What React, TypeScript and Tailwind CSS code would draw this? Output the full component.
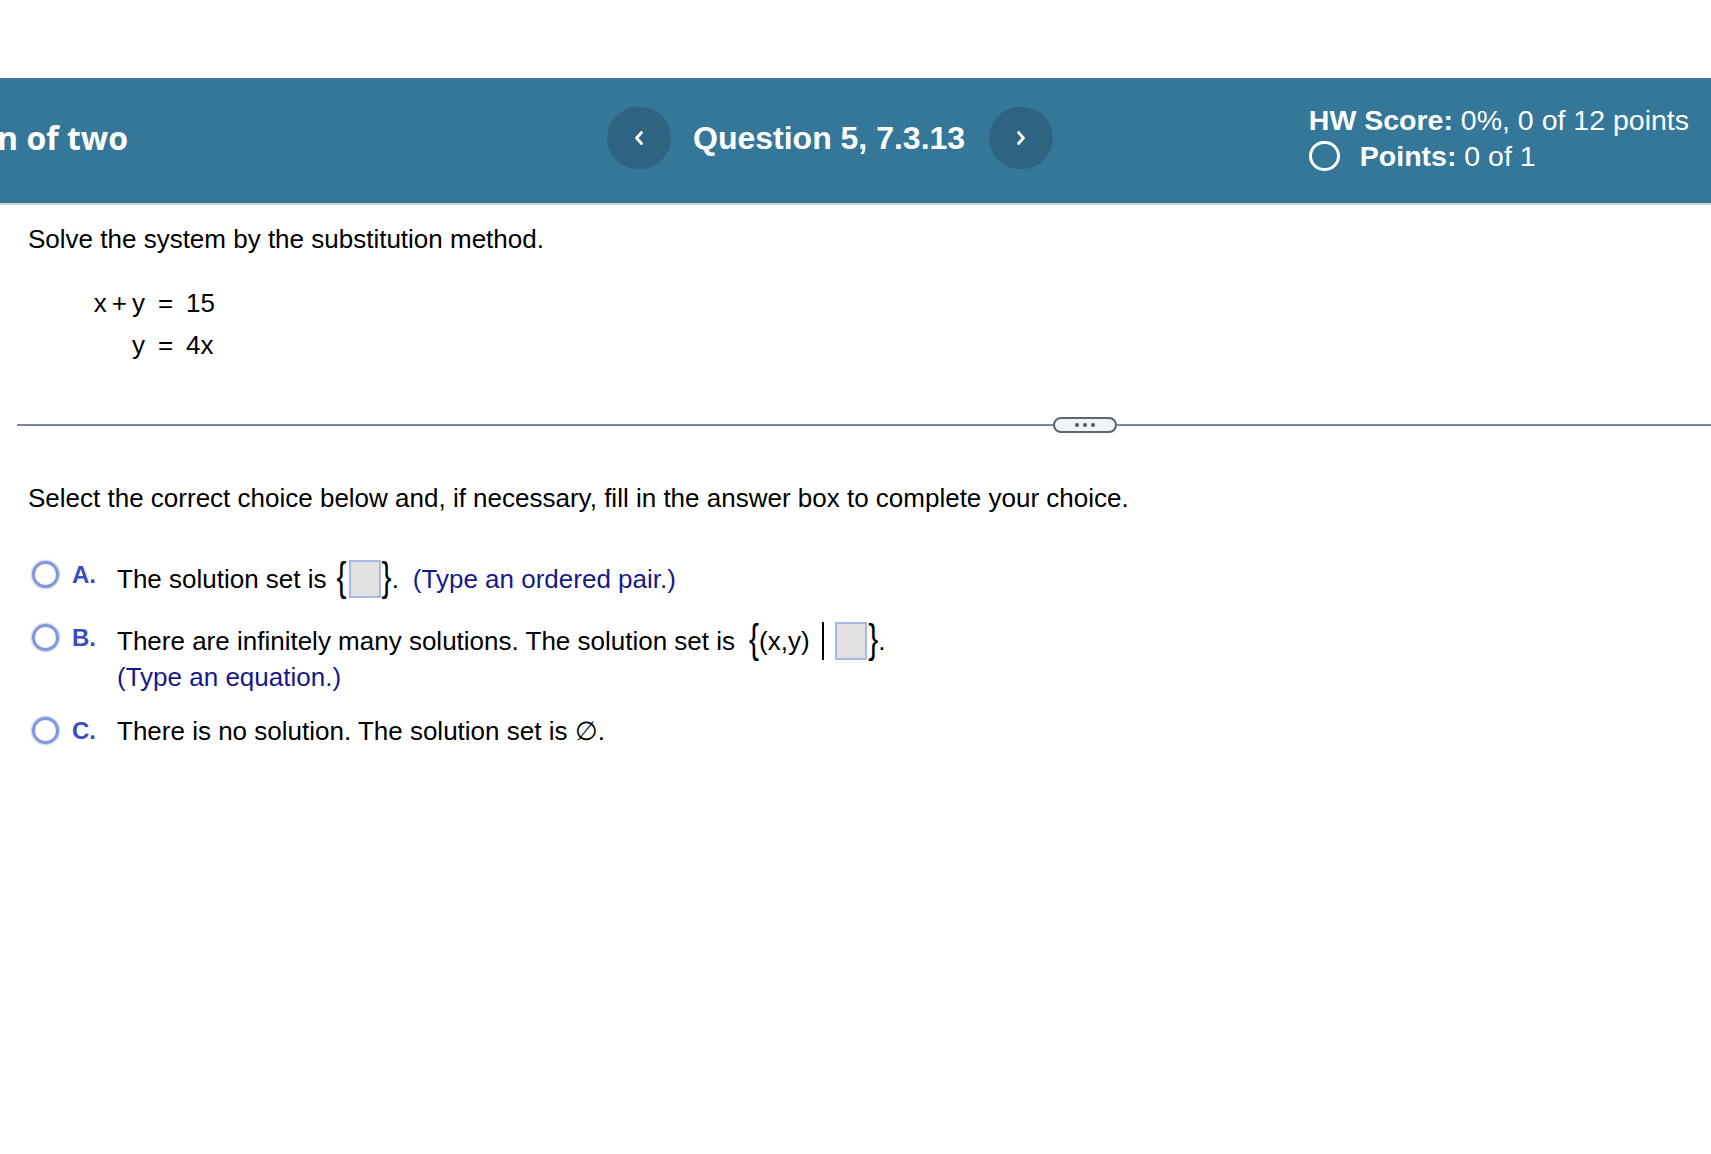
import React from "react";

function Chevron({ dir }: { dir: "left" | "right" }) {
  return (
    <svg width="12" height="16" viewBox="0 0 12 16" fill="none">
      <path
        d={dir === "left" ? "M8.5 2.5 L3.5 8 L8.5 13.5" : "M3.5 2.5 L8.5 8 L3.5 13.5"}
        stroke="white"
        strokeWidth="2.8"
        strokeLinecap="round"
        strokeLinejoin="round"
      />
    </svg>
  );
}

function Radio() {
  return (
    <div className="w-[27px] h-[27px] rounded-full border-[3px] border-[#8298dc] bg-white shadow-[0_0_1.5px_1px_rgba(120,140,220,0.45)] shrink-0" />
  );
}

function Box() {
  return <div className="w-[32px] h-[38px] border-2 border-[#a9b9e6] bg-[#e0e0e0] shrink-0" />;
}

function Brace({ ch }: { ch: string }) {
  return (
    <span className="inline-block text-[30px] leading-none scale-y-[1.35] -translate-y-[1px]">{ch}</span>
  );
}

function Option({
  letter,
  radioTop,
  children,
}: {
  letter: string;
  radioTop: string;
  children: React.ReactNode;
}) {
  return (
    <div className="flex items-start pl-[32px]">
      <div className={`flex items-center h-[27px] ${radioTop}`}>
        <Radio />
        <span className="ml-[13px] w-[45px] text-[24px] font-bold text-[#3b4cc2]">{letter}</span>
      </div>
      <div className="flex flex-col">{children}</div>
    </div>
  );
}

export default function App() {
  return (
    <div className="w-[1711px] min-h-[1154px] bg-white overflow-hidden text-black font-['Liberation_Sans',Arial,sans-serif]">
      {/* Banner */}
      <div className="mt-[78px] h-[127px] bg-[#357799] border-b-2 border-[#c9d3d9] flex items-center text-white">
        <div className="w-[128px] shrink-0 overflow-hidden flex justify-end mb-[6px]">
          <span className="whitespace-nowrap font-['Open_Sans',sans-serif] font-bold text-[32px]">
            Solution of two
          </span>
        </div>
        <div className="ml-[479px] flex items-center mb-[6px]">
          <div className="w-[64px] h-[62px] rounded-full bg-[#2e6482] flex items-center justify-center">
            <Chevron dir="left" />
          </div>
          <span className="ml-[22px] text-[32px] font-bold whitespace-nowrap">Question 5, 7.3.13</span>
          <div className="ml-[24px] w-[64px] h-[62px] rounded-full bg-[#2e6482] flex items-center justify-center">
            <Chevron dir="right" />
          </div>
        </div>
        <div className="ml-auto mr-[22px] flex flex-col text-[28.5px] mb-[5px]">
          <div className="leading-[36px] whitespace-nowrap">
            <span className="font-bold">HW Score:</span> 0%, 0 of 12 points
          </div>
          <div className="flex items-center leading-[36px] whitespace-nowrap">
            <div className="w-[31px] h-[30px] rounded-full border-[3px] border-white" />
            <span className="ml-[20px] font-bold">Points:</span>
            <span>&nbsp;0 of 1</span>
          </div>
        </div>
      </div>

      {/* Body */}
      <div className="text-[26px]">
        <div className="pl-[28px] mt-[19px] leading-[30px]">Solve the system by the substitution method.</div>

        <div className="ml-[93px] mt-[28px] grid grid-cols-[52px_41px_auto] leading-[42px]">
          <div className="text-right whitespace-nowrap">
            x<span className="mx-[5px]">+</span>y
          </div>
          <div className="text-center">=</div>
          <div>15</div>
          <div className="text-right">y</div>
          <div className="text-center">=</div>
          <div>4x</div>
        </div>

        {/* Divider */}
        <div className="mt-[51px] pl-[17px] flex items-center h-[16px]">
          <div className="w-[1036px] h-[2px] bg-[#7d8793]" />
          <div className="w-[64px] h-[16px] rounded-full border-2 border-[#5b6472] bg-[#f1f3f5] flex items-center justify-center gap-[4px] shrink-0">
            <div className="w-[4px] h-[4px] rounded-full bg-[#4d5562]" />
            <div className="w-[4px] h-[4px] rounded-full bg-[#4d5562]" />
            <div className="w-[4px] h-[4px] rounded-full bg-[#4d5562]" />
          </div>
          <div className="flex-1 h-[2px] bg-[#7d8793]" />
        </div>

        <div className="pl-[28px] mt-[50px] leading-[30px]">
          Select the correct choice below and, if necessary, fill in the answer box to complete your choice.
        </div>

        <div className="mt-[46px]">
          <Option letter="A." radioTop="mt-[2px]">
            <div className="h-[40px] flex items-center whitespace-nowrap">
              <span>The solution set is</span>
              <span className="ml-[10px]"><Brace ch="{" /></span>
              <div className="ml-[2px]"><Box /></div>
              <span className="ml-[1px]"><Brace ch="}" /></span>
              <span>.</span>
              <span className="ml-[14px] text-[#16198a]">(Type an ordered pair.)</span>
            </div>
          </Option>
        </div>

        <div className="mt-[22px]">
          <Option letter="B." radioTop="mt-[3px]">
            <div className="h-[40px] flex items-center whitespace-nowrap">
              <span>There are infinitely many solutions. The solution set is</span>
              <span className="ml-[14px]"><Brace ch="{" /></span>
              <span>(x,y)</span>
              <div className="ml-[12px] w-[2.5px] h-[38px] bg-black" />
              <div className="ml-[11px]"><Box /></div>
              <span className="ml-[1px]"><Brace ch="}" /></span>
              <span>.</span>
            </div>
            <div className="h-[32px] leading-[32px] text-[#16198a]">(Type an equation.)</div>
          </Option>
        </div>

        <div className="mt-[18px]">
          <Option letter="C." radioTop="mt-[6px]">
            <div className="h-[40px] flex items-center whitespace-nowrap">
              There is no solution. The solution set is ∅.
            </div>
          </Option>
        </div>
      </div>
    </div>
  );
}
